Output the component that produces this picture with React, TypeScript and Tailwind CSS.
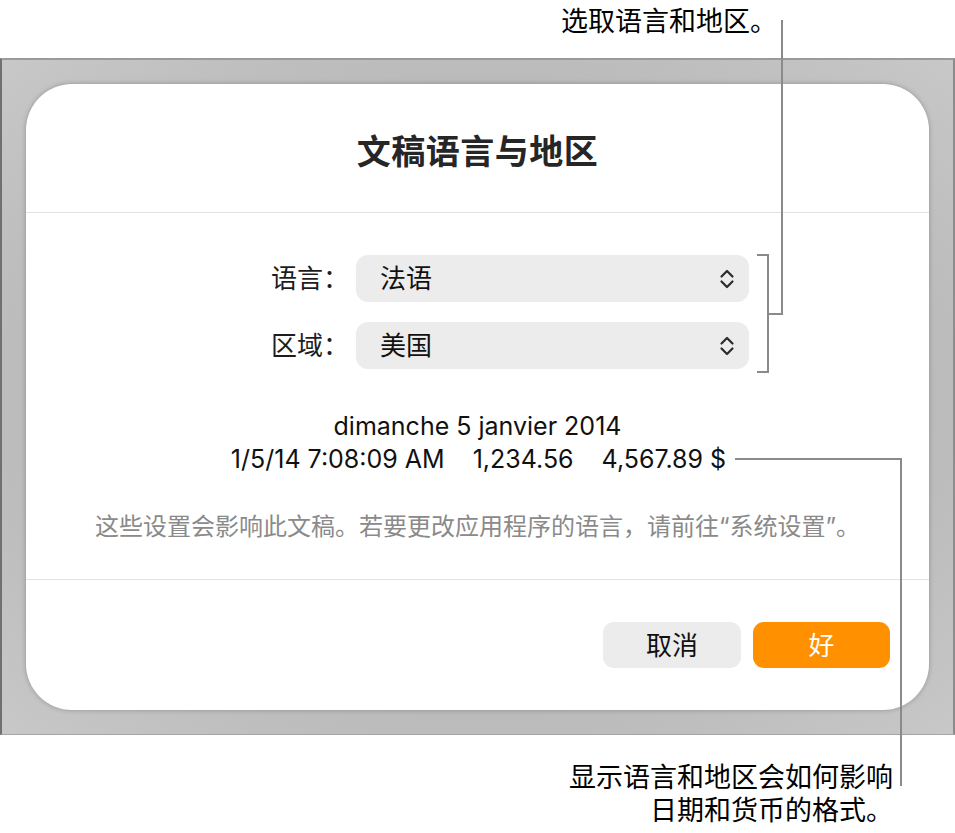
const font = { fontFamily: '"Inter", "Noto Sans CJK SC", sans-serif' };

function Chevrons() {
  return (
    <svg width="16" height="22" viewBox="0 0 16 22" fill="none" stroke="#2b2b2b" strokeWidth="2.2" strokeLinecap="round" strokeLinejoin="round">
      <path d="M2.5 8.5 L8 3 L13.5 8.5" />
      <path d="M2.5 13.5 L8 19 L13.5 13.5" />
    </svg>
  );
}

function SelectRow({ label, value }: { label: string; value: string }) {
  return (
    <div className="flex items-center">
      <div className="w-[330px] text-right text-[26px] text-[#1d1d1d] pr-[7px]">{label}</div>
      <div className="w-[393px] h-[47px] rounded-[12px] bg-[#ececec] flex items-center justify-between pl-[24px] pr-[14px]">
        <span className="text-[26px] text-[#111]">{value}</span>
        <Chevrons />
      </div>
    </div>
  );
}

export default function App() {
  return (
    <div className="relative w-[955px] h-[833px] bg-white overflow-hidden" style={font}>
      {/* top callout */}
      <div className="h-[58px] flex justify-end pr-[178px] pt-[5px]">
        <span className="text-[27px] leading-[34px] text-black">选取语言和地区。</span>
      </div>

      {/* gray backdrop */}
      <div className="h-[677px] p-[24px] border-t-2 border-t-[#9a9a9a] border-l-2 border-l-[#707070] border-r-2 border-r-[#8c8c8c] border-b border-b-[#a5a5a5] bg-[radial-gradient(ellipse_at_center,#b2b2b2_45%,#c8c8c8_100%)]">
        <div className="h-full bg-white rounded-[46px] shadow-[0_0_5px_rgba(0,0,0,0.25)] flex flex-col">
          <div className="h-[129px] flex items-center justify-center pt-[6px] border-b border-[#e2e2e2]">
            <h1 className="text-[34px] font-bold text-[#262626] tracking-[0.5px]">文稿语言与地区</h1>
          </div>

          <div className="flex flex-col gap-[20px] pt-[42px]">
            <SelectRow label="语言：" value="法语" />
            <SelectRow label="区域：" value="美国" />
          </div>

          <div className="pt-[41px] flex flex-col items-center text-[25px] leading-[33px] text-[#111]">
            <div>dimanche 5 janvier 2014</div>
            <div className="flex gap-[28px] pl-[2px]">
              <span>1/5/14 7:08:09 AM</span>
              <span>1,234.56</span>
              <span>4,567.89 $</span>
            </div>
          </div>

          <div className="pt-[35px] pb-[36px] text-center text-[24px] leading-[32px] text-[#8a8a8a] border-b border-[#e2e2e2]">
            这些设置会影响此文稿。若要更改应用程序的语言，请前往“系统设置”。
          </div>

          <div className="flex justify-end gap-[12px] pt-[42px] pr-[39px]">
            <button className="w-[138px] h-[46px] rounded-[11px] bg-[#ececec] text-[26px] text-[#111]">取消</button>
            <button className="w-[137px] h-[46px] rounded-[11px] bg-[#ff9000] text-[26px] text-white">好</button>
          </div>
        </div>
      </div>

      {/* bottom callout */}
      <div className="pt-[26px] pr-[62px] text-right text-[27px] leading-[33px] text-black">
        <div>显示语言和地区会如何影响</div>
        <div>日期和货币的格式。</div>
      </div>

      {/* leader lines */}
      <div className="absolute left-[781px] top-[20px] w-[2px] h-[295px] bg-[#8a8a8a]" />
      <div className="absolute left-[767px] top-[313px] w-[16px] h-[2px] bg-[#8a8a8a]" />
      <div className="absolute left-[767px] top-[254px] w-[2px] h-[119px] bg-[#8a8a8a]" />
      <div className="absolute left-[757px] top-[254px] w-[12px] h-[2px] bg-[#8a8a8a]" />
      <div className="absolute left-[757px] top-[371px] w-[12px] h-[2px] bg-[#8a8a8a]" />
      <div className="absolute left-[735px] top-[458px] w-[167px] h-[2px] bg-[#8a8a8a]" />
      <div className="absolute left-[900px] top-[458px] w-[2px] h-[328px] bg-[#8a8a8a]" />
    </div>
  );
}
